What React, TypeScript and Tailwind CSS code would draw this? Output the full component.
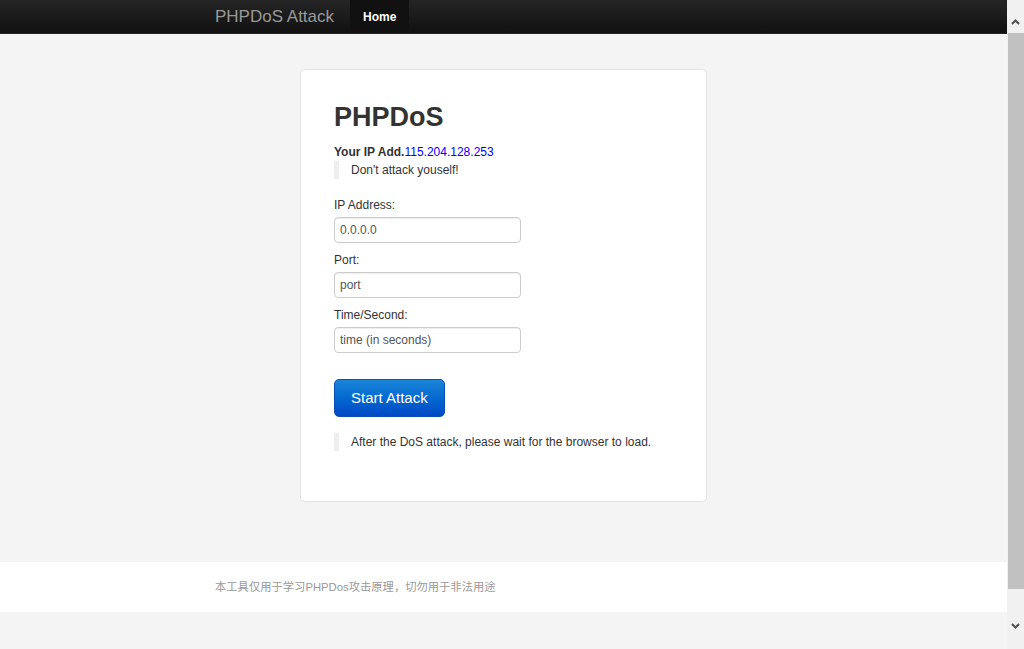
import * as React from 'react';

const font = { fontFamily: '"Liberation Sans", Arial, sans-serif' };

const Field: React.FunctionComponent<{ label: string; placeholder: string; first?: boolean }> = ({ label, placeholder, first }) => (
    <div className={first ? 'mt-[17px]' : 'mt-[8px]'}>
        <label className="block text-[12px] leading-[18px] text-[#333]">{label}</label>
        <input
            className="mt-[3px] block h-[26px] w-[187px] rounded-[4px] border border-[#ccc] bg-white px-[5px] text-[12px] text-[#555] placeholder:text-[#555] shadow-[inset_0_1px_1px_rgba(0,0,0,0.075)] outline-none"
            placeholder={placeholder}
        />
    </div>
);

const Chevron: React.FunctionComponent<{ down?: boolean }> = ({ down }) => (
    <svg width="9" height="6" viewBox="0 0 9 6">
        <polyline
            points={down ? '1,1 4.5,4.5 8,1' : '1,5 4.5,1.5 8,5'}
            fill="none"
            stroke="#505050"
            strokeWidth="2"
        />
    </svg>
);

export default function App() {
    return (
        <div className="flex h-[649px] w-[1024px] overflow-hidden bg-[#f4f4f4]" style={font}>
            <div className="flex h-full w-[1007px] flex-col">
                <nav className="h-[34px] shrink-0 border-b border-[#252525] bg-gradient-to-b from-[#252525] to-[#111]">
                    <div className="mx-auto flex h-full w-[577px] items-stretch">
                        <a className="flex items-center pr-[16px] text-[17px] text-[#999]">PHPDoS Attack</a>
                        <a className="flex items-center bg-[#111] px-[13px] text-[12px] font-bold text-white">Home</a>
                    </div>
                </nav>

                <div className="mx-auto mt-[35px] w-[407px] shrink-0 rounded-[5px] border border-[#e3e3e3] bg-white px-[33px] pb-[34px] pt-[33px]">
                    <h1 className="mb-[12px] text-[27px] font-bold leading-[29px] text-[#333]">PHPDoS</h1>
                    <p className="text-[12px] leading-[17px] text-[#333]">
                        <b>Your IP Add.</b>
                        <span className="text-[#0000ff]">115.204.128.253</span>
                    </p>
                    <blockquote className="border-l-[5px] border-[#eee] pl-[12px] text-[12px] leading-[18px] text-[#333]">
                        Don&apos;t attack youself!
                    </blockquote>

                    <Field first label="IP Address:" placeholder="0.0.0.0" />
                    <Field label="Port:" placeholder="port" />
                    <Field label="Time/Second:" placeholder="time (in seconds)" />

                    <button className="mt-[26px] h-[38px] rounded-[5px] border border-[#0a4fb8] bg-gradient-to-b from-[#1a86d8] to-[#0348c6] px-[16px] text-[15px] text-white">
                        Start Attack
                    </button>

                    <blockquote className="mb-[16px] mt-[16px] border-l-[5px] border-[#eee] pl-[12px] text-[12px] leading-[18px] text-[#333]">
                        After the DoS attack, please wait for the browser to load.
                    </blockquote>
                </div>

                <footer className="mt-[60px] h-[50px] shrink-0 bg-white">
                    <div
                        className="mx-auto flex h-full w-[577px] items-center text-[11.3px] text-[#999]"
                        style={{ fontFamily: '"Liberation Sans", "Noto Sans CJK SC", sans-serif' }}
                    >
                        本工具仅用于学习PHPDos攻击原理，切勿用于非法用途
                    </div>
                </footer>
            </div>

            {/* window scrollbar */}
            <div className="flex h-full w-[17px] flex-col bg-[#f1f1f1]">
                <div className="flex h-[33px] items-end justify-center pb-[8px]">
                    <Chevron />
                </div>
                <div className="ml-[1px] h-[556px] bg-[#c1c1c1]" />
                <div className="flex-1" />
                <div className="flex h-[34px] items-start justify-center pt-[8px]">
                    <Chevron down />
                </div>
            </div>
        </div>
    );
}
